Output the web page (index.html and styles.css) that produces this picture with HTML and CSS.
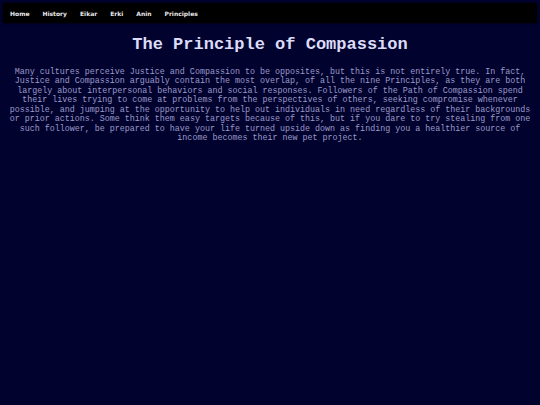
FILE: index.html
```html
<!DOCTYPE html>
<html>
<head>
<meta charset="utf-8">
<link rel="stylesheet" href="styles.css">
</head>
<body>
<nav class="nav">
  <a class="nav-link" href="#">Home</a>
  <a class="nav-link" href="#">History</a>
  <a class="nav-link" href="#">Eikar</a>
  <a class="nav-link" href="#">Erki</a>
  <a class="nav-link" href="#">Anin</a>
  <a class="nav-link" href="#">Principles</a>
</nav>
<main class="content">
  <h1 class="title">The Principle of Compassion</h1>
  <p class="text">Many cultures perceive Justice and Compassion to be opposites, but this is not entirely true. In fact, Justice and Compassion arguably contain the most overlap, of all the nine Principles, as they are both largely about interpersonal behaviors and social responses. Followers of the Path of Compassion spend their lives trying to come at problems from the perspectives of others, seeking compromise whenever possible, and jumping at the opportunity to help out individuals in need regardless of their backgrounds or prior actions. Some think them easy targets because of this, but if you dare to try stealing from one such follower, be prepared to have your life turned upside down as finding you a healthier source of income becomes their new pet project.</p>
</main>
</body>
</html>
```
FILE: styles.css
```css
html, body {
  margin: 0;
  padding: 0;
  background: #02022e;
  height: 100%;
}
.nav {
  margin: 3px 3px 0 3px;
  height: 20px;
  background: #000;
  display: flex;
  align-items: center;
  padding-left: 7px;
  box-shadow: 0 0 2px #000;
}
.nav-link {
  font-family: "DejaVu Sans", sans-serif;
  font-size: 6px;
  font-weight: bold;
  color: #e8e8e8;
  text-decoration: none;
  margin-right: 13px;
}
.content {
  padding: 0 5px;
}
.title {
  font-family: "Liberation Mono", monospace;
  font-size: 17px;
  font-weight: bold;
  color: #dcdcf8;
  text-align: center;
  margin: 12px 0 13px 0;
  line-height: 20px;
}
.text {
  font-family: "Liberation Mono", monospace;
  font-size: 8.35px;
  line-height: 9.45px;
  color: #9a9ac8;
  text-align: center;
  margin: 0;
}
```
